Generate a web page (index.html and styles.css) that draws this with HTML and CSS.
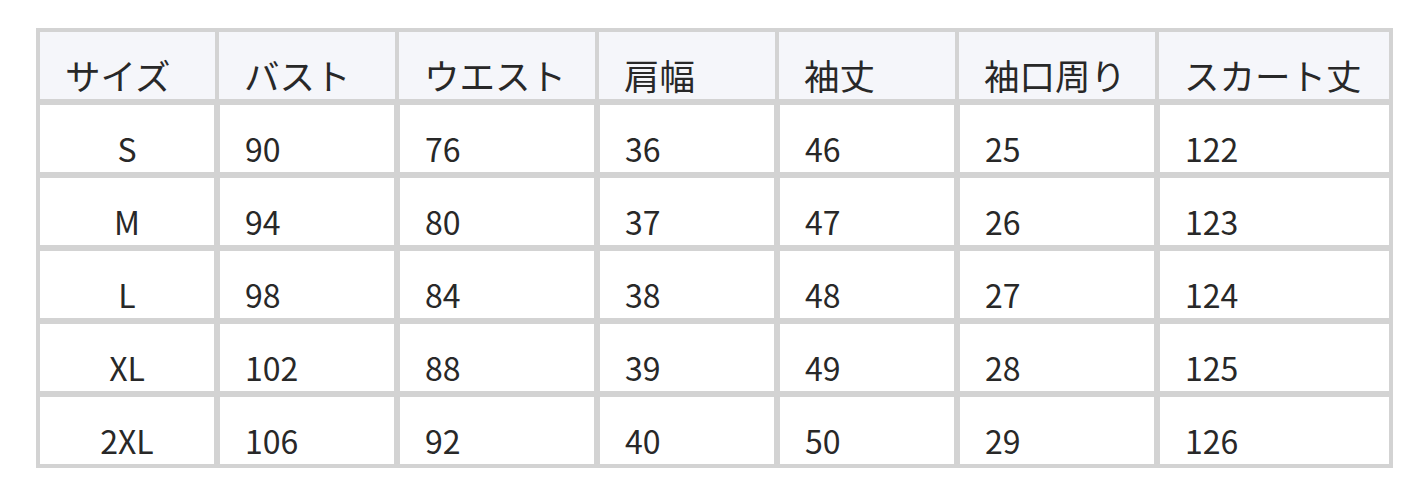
FILE: index.html
```html
<!DOCTYPE html>
<html lang="ja">
<head>
<meta charset="utf-8">
<title>サイズ表</title>
<link rel="stylesheet" href="styles.css">
</head>
<body>
<table class="size-table">
  <colgroup>
    <col class="c180"><col class="c180"><col class="c200"><col class="c180"><col class="c180"><col class="c200"><col class="c235">
  </colgroup>
  <thead>
    <tr><th>サイズ</th><th>バスト</th><th>ウエスト</th><th>肩幅</th><th>袖丈</th><th>袖口周り</th><th>スカート丈</th></tr>
  </thead>
  <tbody>
    <tr><td class="size">S</td><td>90</td><td>76</td><td>36</td><td>46</td><td>25</td><td>122</td></tr>
    <tr><td class="size">M</td><td>94</td><td>80</td><td>37</td><td>47</td><td>26</td><td>123</td></tr>
    <tr><td class="size">L</td><td>98</td><td>84</td><td>38</td><td>48</td><td>27</td><td>124</td></tr>
    <tr><td class="size">XL</td><td>102</td><td>88</td><td>39</td><td>49</td><td>28</td><td>125</td></tr>
    <tr><td class="size">2XL</td><td>106</td><td>92</td><td>40</td><td>50</td><td>29</td><td>126</td></tr>
  </tbody>
</table>
</body>
</html>
```

FILE: styles.css
```css
html, body {
  margin: 0;
  padding: 0;
  background: #ffffff;
}

body {
  padding: 28px 0 0 36px;
  font-family: "Noto Sans CJK JP", "Noto Sans", sans-serif;
  color: #282828;
}

.size-table {
  table-layout: fixed;
  width: 1357px;
  border-collapse: separate;
  border-spacing: 0;
  border: 1px solid #d3d3d3;
  font-size: 32px;
  line-height: 48px;
}

.c180 { width: 180px; }
.c200 { width: 200px; }
.c235 { width: 235px; }

.size-table th,
.size-table td {
  box-sizing: border-box;
  padding: 19px 0 0 25px;
  text-align: left;
  font-weight: normal;
  white-space: nowrap;
  vertical-align: bottom;
  border-style: solid;
  border-color: #d3d3d3;
}

.size-table th {
  background: #f5f6fa;
  border-width: 3px 2px 3px 2px;
  font-size: 35.5px;
}

.size-table th:first-child { border-left-width: 3px; }
.size-table th:last-child { border-right-width: 3px; }

.size-table td {
  background: #ffffff;
  border-width: 3px;
}

.size-table td.size {
  text-align: center;
  padding-left: 0;
}
```
